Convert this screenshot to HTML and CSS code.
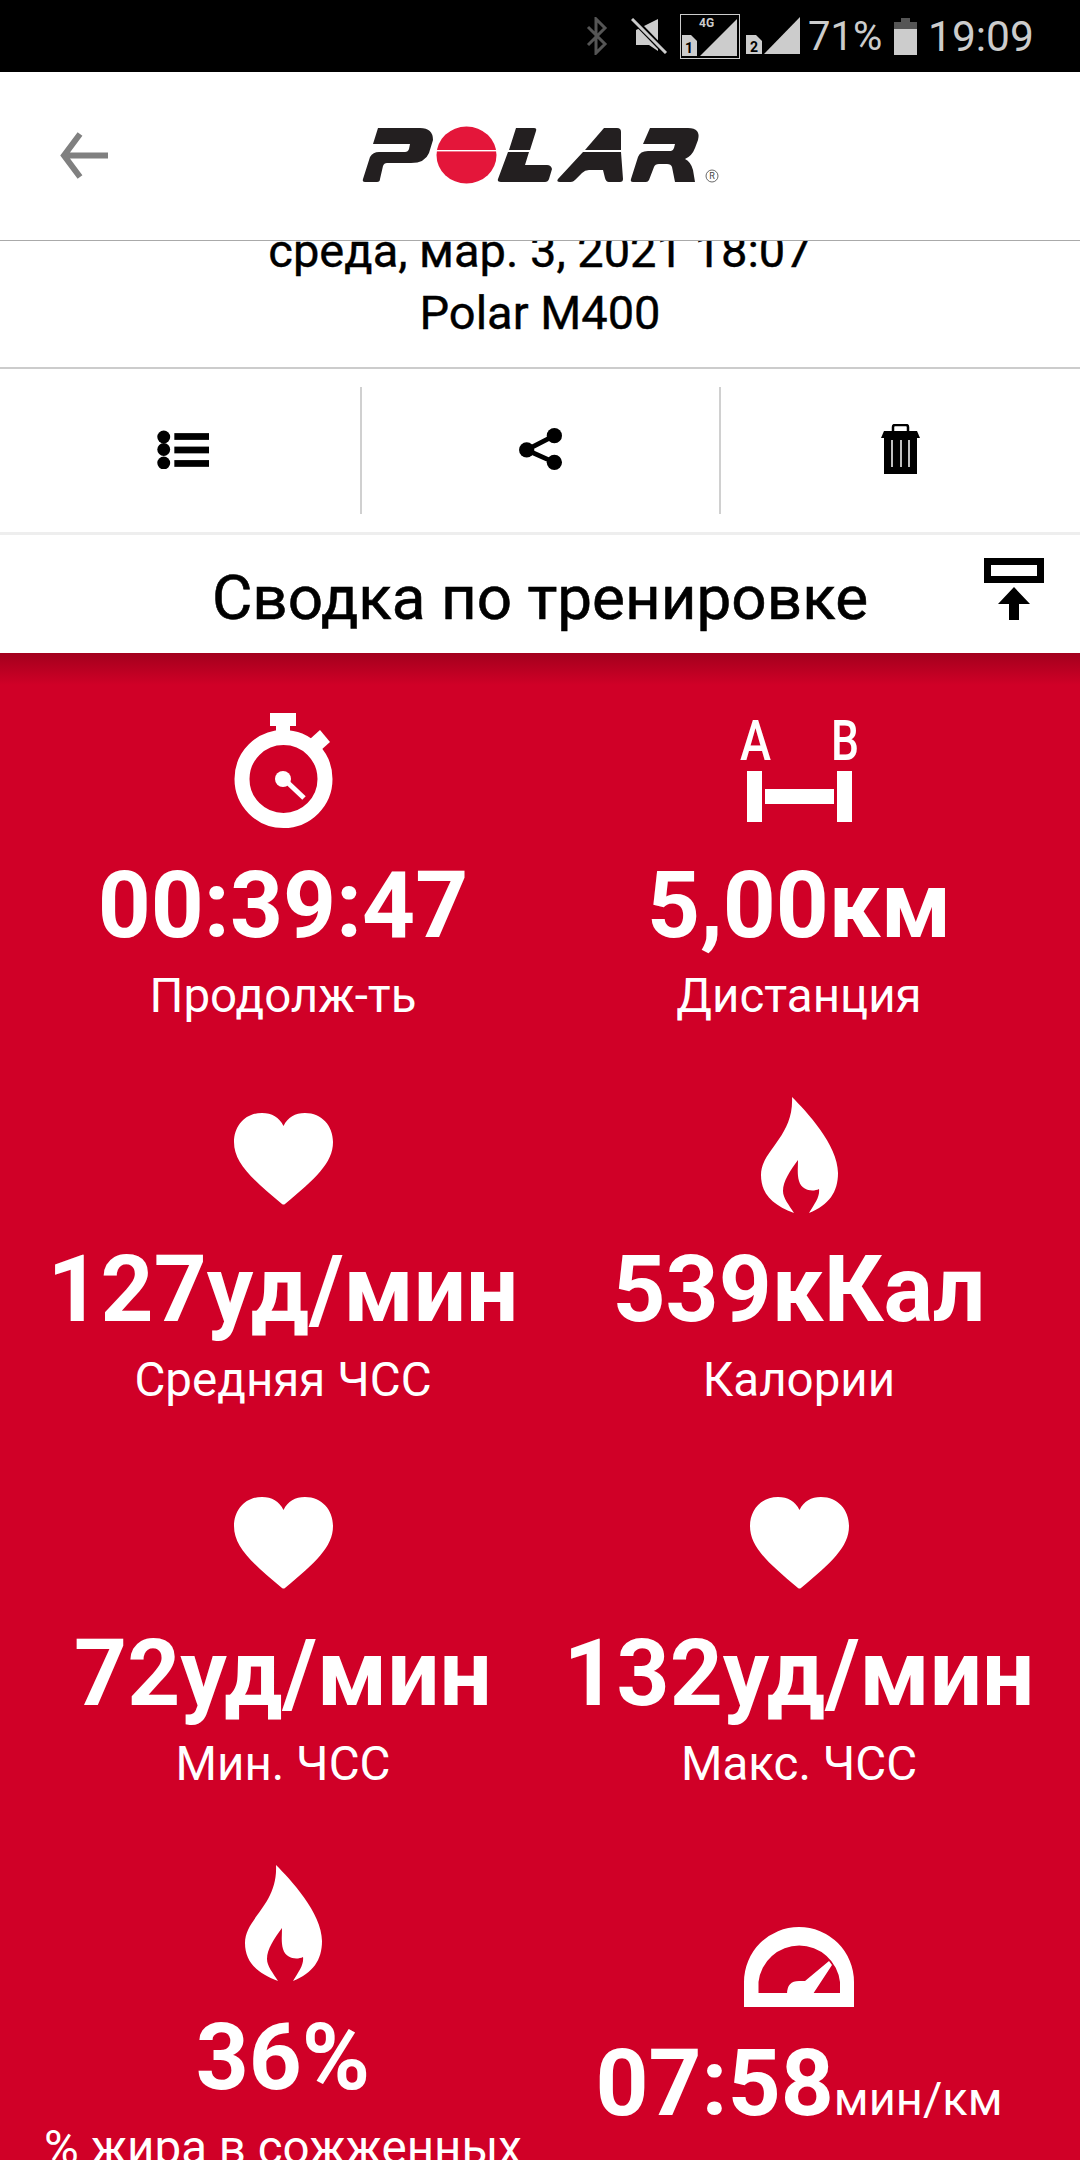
FILE: index.html
```html
<!DOCTYPE html>
<html>
<head>
<meta name="viewport" content="width=device-width, initial-scale=1">
<link rel="stylesheet" href="styles.css">
</head>
<body>

<svg class="defs" width="0" height="0">
  <symbol id="heart" viewBox="0 -16 99 116">
    <path d="M49.5,13 C45,4 38,0 28,0 C11,0 0,13 0,29 C0,50 18,66 48,91 Q49.5,92 51,91 C81,66 99,50 99,29 C99,13 88,0 71,0 C61,0 54,4 49.5,13 Z"/>
  </symbol>
  <symbol id="flame" viewBox="0 0 77 116">
    <path d="M31,0 C45,14 77,48 77,76 C77,95 68,108 48,116 C54,106 59,100 58,92 C52,95 41,94 38,84 C36,77 37,70 37,63 C29,74 22,84 22,94 C22,101 28,108 33,116 C12,108 0,97 0,78 C0,53 33,40 31,0 Z"/>
  </symbol>
</svg>

<div class="statusbar">
  <svg class="st-bt" width="22" height="38" viewBox="0 0 22 38"><path d="M2,10 L19,27 L10,36 V2 L19,11 L2,28" fill="none" stroke="#555" stroke-width="3"/></svg>
  <svg class="st-mute" width="37" height="36" viewBox="0 0 37 36"><path d="M5,12 L27,1 V33 L18,27 H5 Z" fill="#ccc"/><path d="M2,1 L35,35" stroke="#000" stroke-width="6"/><path d="M1,1 L35,35" stroke="#ccc" stroke-width="3"/></svg>
  <div class="sim-box">
    <span class="sim-tag">4G</span>
    <svg width="58" height="43" viewBox="0 0 58 43">
      <path d="M1,20 H10 L16,26 V41 H1 Z" fill="#ccc"/>
      <text x="8" y="38" class="sim-num">1</text>
      <path d="M19,41 L56,4 V41 Z" fill="#ccc"/>
    </svg>
  </div>
  <svg class="st-sim2" width="55" height="38" viewBox="0 0 55 38">
    <path d="M0,18 H10 L16,24 V37 H0 Z" fill="#ccc"/>
    <text x="8" y="35" class="sim-num">2</text>
    <path d="M18,37 L54,0 V37 Z" fill="#ccc"/>
  </svg>
  <span class="st-pct">71%</span>
  <div class="battery"><div class="battery-cap"></div><div class="battery-top"></div><div class="battery-fill"></div></div>
  <span class="st-time">19:09</span>
</div>

<div class="topbar">
  <svg class="back" width="48" height="48" viewBox="0 0 48 48"><path d="M48,23.5 H4 M20,2 L4,23.5 L20,45" fill="none" stroke="#808080" stroke-width="6"/></svg>
  <svg class="logo" width="370" height="70" viewBox="0 0 370 70" role="img" aria-label="Polar">
    <g fill="#231f20">
      <path d="M25,8 H67 Q80,8 80,20 L76,33 Q72,43 58,43 H34 Q31,43 30,46 L27,59 Q27,62 24,62 H12 Q9,62 10,59 L17,37 Q20,32 26,32 H52 Q55,32 56,29 L57,24 H20 Z"/>
      <path d="M163,8 H181 Q184,8 183,11 L177,30 H156 Z"/>
      <path d="M155,32 H176 L172,45 H194 Q198,45 199,49 L196,59 Q195,62 192,62 H148 Q144,62 145,59 Z"/>
      <path d="M251,8 H264 Q268,8 268,12 V30 H232 Z"/>
      <path d="M230,32 H268 L270,59 Q270,62 267,62 H256 Q253,62 252,58 L250,50 H236 Q232,50 229,53 L222,60 Q220,62 218,62 H207 Q203,62 205,59 Z"/>
      <path d="M297,8 H335 Q348,8 345,20 L342,28 Q339,36 332,39 Q338,42 340,50 L342,62 H322 L319,47 Q318,44 314,44 H306 Q302,44 301,47 L296,60 Q295,62 293,62 H280 Q277,62 278,59 L285,37 Q287,31 295,31 H318 Q320,31 321,28 L322,24 H290 Z"/>
    </g>
    <ellipse cx="113.5" cy="35" rx="30" ry="28.5" fill="#e4163a"/>
    <rect x="80" y="30" width="70" height="1.4" fill="#fff"/>
    <circle cx="359" cy="56" r="6" fill="none" stroke="#444" stroke-width="0.8"/>
    <text x="359" y="59" class="logo-reg">R</text>
  </svg>
</div>

<div class="workout-info">
  <div>среда, мар. 3, 2021 18:07</div>
  <div>Polar M400</div>
</div>

<div class="actions">
  <div class="action action-list">
    <svg width="52" height="39" viewBox="0 0 54 40">
      <circle cx="7" cy="7" r="6.7"/><circle cx="7" cy="20" r="6.7"/><circle cx="7" cy="34" r="6.7"/>
      <rect x="18" y="3" width="36" height="7"/><rect x="18" y="17" width="36" height="7"/><rect x="18" y="31" width="36" height="7"/>
    </svg>
  </div>
  <div class="action">
    <svg width="44" height="42" viewBox="0 0 46 44">
      <path d="M8,23 L37,8 M8,23 L37,36" stroke="#000" stroke-width="5"/>
      <circle cx="37" cy="8" r="8"/><circle cx="8" cy="23" r="8"/><circle cx="37" cy="36" r="8"/>
    </svg>
  </div>
  <div class="action">
    <svg width="39" height="50" viewBox="0 0 39 50">
      <path d="M12,7 V3 Q12,1 14,1 H25 Q27,1 27,3 V7" fill="none" stroke="#000" stroke-width="2.5"/>
      <path d="M3,7 H36 L39,14 H0 Z"/>
      <path d="M3,14 H36 V50 H3 Z"/>
      <path d="M11,16 V43 M20,16 V43 M28,16 V43" stroke="#fff" stroke-width="1.5"/>
    </svg>
  </div>
</div>

<div class="summary-head">
  <h2>Сводка по тренировке</h2>
  <svg class="collapse" width="60" height="62" viewBox="0 0 60 62">
    <rect x="3.5" y="3.5" width="53" height="18" fill="none" stroke="#000" stroke-width="7"/>
    <path d="M30,29 L46,46 H35 V62 H25 V46 H14 Z"/>
  </svg>
</div>

<div class="stats">
  <div class="stat">
    <div class="stat-icon">
      <svg width="99" height="116" viewBox="0 0 99 116">
        <path d="M36,0 H62 V13 H56 V20 H42 V13 H36 Z"/>
        <path d="M86,17 L96,29 L86,38 L76,26 Z"/>
        <circle cx="49.5" cy="66" r="41.5" fill="none" stroke="#fff" stroke-width="15"/>
        <circle cx="49" cy="66" r="8"/>
        <path d="M52,68 L70,85" stroke="#fff" stroke-width="5"/>
      </svg>
    </div>
    <div class="stat-value">00:39:47</div>
    <div class="stat-label">Продолж-ть</div>
  </div>
  <div class="stat">
    <div class="stat-icon">
      <svg width="124" height="122" viewBox="-4 -6 124 122">
        <text x="-1" y="47" class="ab-letter" textLength="31" lengthAdjust="spacingAndGlyphs">A</text>
        <text x="90" y="47" class="ab-letter" textLength="28" lengthAdjust="spacingAndGlyphs">B</text>
        <rect x="6" y="58" width="15" height="51"/>
        <rect x="96" y="58" width="15" height="51"/>
        <rect x="24" y="76" width="69" height="15"/>
      </svg>
    </div>
    <div class="stat-value">5,00км</div>
    <div class="stat-label">Дистанция</div>
  </div>

  <div class="stat">
    <div class="stat-icon"><svg width="99" height="116"><use href="#heart"/></svg></div>
    <div class="stat-value">127уд/мин</div>
    <div class="stat-label">Средняя ЧСС</div>
  </div>
  <div class="stat">
    <div class="stat-icon"><svg width="77" height="116"><use href="#flame"/></svg></div>
    <div class="stat-value">539кКал</div>
    <div class="stat-label">Калории</div>
  </div>

  <div class="stat">
    <div class="stat-icon"><svg width="99" height="116"><use href="#heart"/></svg></div>
    <div class="stat-value">72уд/мин</div>
    <div class="stat-label">Мин. ЧСС</div>
  </div>
  <div class="stat">
    <div class="stat-icon"><svg width="99" height="116"><use href="#heart"/></svg></div>
    <div class="stat-value">132уд/мин</div>
    <div class="stat-label">Макс. ЧСС</div>
  </div>

  <div class="stat">
    <div class="stat-icon"><svg width="77" height="116"><use href="#flame"/></svg></div>
    <div class="stat-value">36%</div>
    <div class="stat-label">% жира в сожженных калориях</div>
  </div>
  <div class="stat">
    <div class="stat-icon stat-icon-tall">
      <svg width="110" height="80" viewBox="0 0 110 80">
        <path fill-rule="evenodd" d="M0,80 V55 A55,55 0 0 1 110,55 V80 Z M14.5,66 H96 V55 A41,41 0 0 0 14.5,55 Z"/>
        <path d="M43,67 Q43,54 55,54 H61 L85,34 L88,38 L69,67 Z"/>
      </svg>
    </div>
    <div class="stat-value">07:58<span class="stat-unit">мин/км</span></div>
    <div class="stat-label">Средний темп</div>
  </div>
</div>

</body>
</html>
```

FILE: styles.css
```css
html, body {
    margin: 0;
    padding: 0;
}

body {
    width: 1080px;
    height: 2160px;
    overflow: hidden;
    background-color: #d00027;
    font-family: Roboto, Arial, sans-serif;
    color: #000;
}

.defs {
    display: block;
    height: 0;
}

/* status bar */
.statusbar {
    height: 72px;
    background-color: #000;
    color: #ccc;
    display: flex;
    align-items: center;
    padding-left: 586px;
    box-sizing: border-box;
}

.st-mute {
    margin-left: 23px;
}

.sim-box {
    position: relative;
    width: 60px;
    height: 45px;
    margin-left: 12px;
    box-sizing: border-box;
    border: 1px solid #ccc;
}

.sim-box svg {
    display: block;
}

.sim-tag {
    position: absolute;
    left: 18px;
    top: 1px;
    font-size: 12px;
    font-weight: 700;
    color: #ccc;
}

.sim-num {
    font-family: Roboto, sans-serif;
    font-size: 14px;
    font-weight: 700;
    fill: #000;
    text-anchor: middle;
}

.st-sim2 {
    margin-left: 6px;
}

.st-pct {
    margin-left: 7px;
    font-size: 40px;
    width: 72px;
}

.battery {
    margin-left: 14px;
    width: 23px;
    display: flex;
    flex-direction: column;
    align-items: center;
}

.battery-cap {
    width: 9px;
    height: 4px;
    background-color: #555;
}

.battery-top {
    width: 100%;
    height: 7px;
    background-color: #555;
}

.battery-fill {
    width: 100%;
    height: 26px;
    background-color: #ccc;
}

.st-time {
    margin-left: 11px;
    font-size: 42.5px;
}

/* header */
.topbar {
    height: 169px;
    background-color: #fff;
    border-bottom: 1px solid #aaa;
    box-sizing: border-box;
    display: flex;
    align-items: flex-start;
}

.back {
    margin: 60px 0 0 60px;
}

.logo {
    margin: 48px 0 0 245px;
}

.workout-info {
    height: 126px;
    background-color: #fff;
    overflow: hidden;
    display: flex;
    flex-direction: column;
    justify-content: flex-end;
    text-align: center;
    font-size: 47px;
    line-height: 62px;
    padding-bottom: 23px;
    box-sizing: border-box;
    -webkit-text-stroke: 0.4px #000;
}

.actions {
    height: 168px;
    background-color: #fff;
    border-top: 2px solid #ccc;
    border-bottom: 3px solid #eee;
    box-sizing: border-box;
    padding: 18px 0;
    display: grid;
    grid-template-columns: 362px 359px 359px;
}

.action {
    display: flex;
    align-items: center;
    justify-content: center;
    border-right: 2px solid #d0d0d0;
    padding-bottom: 3px;
}

.action:last-child {
    border-right: none;
}

.action-list svg {
    margin-left: 5px;
}

.summary-head {
    height: 118px;
    background-color: #fff;
    display: grid;
    grid-template-columns: 1fr auto 1fr;
    align-items: center;
}

.summary-head h2 {
    grid-column: 2;
    margin: 0;
    padding-top: 6px;
    font-size: 62px;
    font-weight: 400;
    -webkit-text-stroke: 0.6px #000;
}

.collapse {
    justify-self: end;
    align-self: start;
    margin: 23px 36px 0 0;
}

/* stats */
.stats {
    background: linear-gradient(to bottom, #a3001d 0, #d00027 32px) no-repeat;
    padding: 60px 24px 0 25px;
    display: grid;
    grid-template-columns: 516px 516px;
    row-gap: 71px;
    color: #fff;
    fill: #fff;
}

.stat {
    text-align: center;
}

.stat-icon {
    height: 116px;
    display: flex;
    align-items: flex-end;
    justify-content: center;
}

.stat-icon-tall {
    height: 142px;
}

.stat-value {
    margin-top: 27px;
    font-size: 92.5px;
    font-weight: 700;
    line-height: 100px;
    white-space: nowrap;
}

.stat-unit {
    font-size: 47px;
    font-weight: 400;
}

.stat-label {
    margin-top: 10px;
    font-size: 47.5px;
    line-height: 60px;
}

.ab-letter {
    font-family: Roboto, sans-serif;
    font-size: 56px;
    font-weight: 500;
}

.logo-reg {
    font-family: Roboto, sans-serif;
    font-size: 9px;
    fill: #444;
    text-anchor: middle;
}
```
